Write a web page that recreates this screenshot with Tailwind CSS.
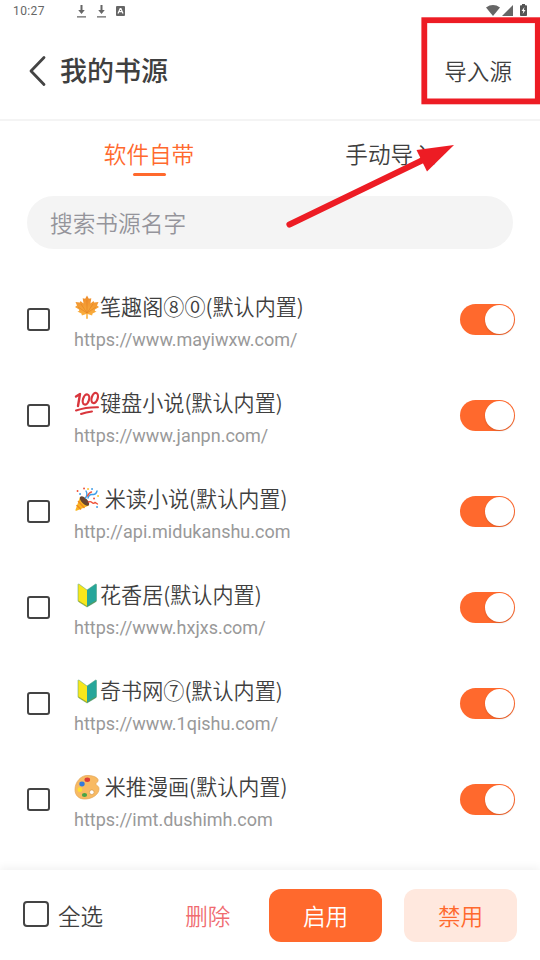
<!DOCTYPE html>
<html lang="zh-CN">
<head>
<meta charset="utf-8">
<title>我的书源</title>
<script src="https://cdn.jsdelivr.net/npm/@tailwindcss/browser@4"></script>
</head>
<body class="bg-white">
<div class="relative flex h-[960px] w-[540px] flex-col overflow-hidden bg-white font-['Noto_Sans_CJK_SC',sans-serif] font-[350] text-[#3f3f3f]">
  <!-- status bar -->
  <div class="flex h-[22px] shrink-0 items-center pl-[13px] pr-3 text-[#666]">
    <span class="w-[63px] font-['Roboto',sans-serif] text-[12px] font-normal leading-[22px] tracking-[0.4px]">10:27</span>
    <svg class="h-[13px] w-[11px]" viewBox="0 0 11 13" fill="#666"><path d="M4.500 0h2v5h2.300L5.500 9 2.200 5h2.300zM1 11.200h9v1.300H1z"/></svg>
    <svg class="ml-[9px] h-[13px] w-[11px]" viewBox="0 0 11 13" fill="#666"><path d="M4.500 0h2v5h2.300L5.500 9 2.200 5h2.300zM1 11.200h9v1.300H1z"/></svg>
    <svg class="ml-[9px] h-[10px] w-[9px]" viewBox="0 0 9 10"><rect width="9" height="10" rx="1" fill="#666"/><path d="M2 7.500 4.200 2.500h.7L7 7.500M3.200 5.600h2.600" fill="none" stroke="#fff" stroke-width="1.200"/></svg>
    <svg class="relative -top-px ml-auto h-[11px] w-[14px]" viewBox="0 0 14 11" fill="#666"><path d="M0 2.500Q7-2.300 14 2.500L7 11z"/></svg>
    <svg class="relative -top-px ml-[2px] h-[11px] w-[11px]" viewBox="0 0 11 11" fill="#666"><path d="M11 0v11H0z"/></svg>
    <svg class="relative -top-px ml-[7px] mr-px h-[12px] w-[7px]" viewBox="0 0 7 12"><path d="M2 0h3v1.200h1.200q.8 0 .8.8v9q0 1-.8 1H.8Q0 12 0 11V2q0-.8.8-.8H2z" fill="#555"/><path d="M4.400 3 1.600 7h1.700L2.700 10l2.800-4H3.900z" fill="#fff"/></svg>
  </div>
  <!-- header -->
  <header class="flex h-[99px] shrink-0 items-center border-b-2 border-[#f4f4f4] pl-[28px] pr-[28px]">
    <svg class="h-[32px] w-[19px]" viewBox="0 0 19 32" fill="none" stroke="#444" stroke-width="2.800" stroke-linecap="round" stroke-linejoin="round"><path d="M16 2.500 3 16l13 13.500"/></svg>
    <h1 class="-mt-[2px] ml-[13px] text-[27px] font-medium leading-[40px]">我的书源</h1>
    <span class="ml-auto text-[22.6px] leading-[34px]">导入源</span>
  </header>
  <!-- tabs -->
  <nav class="flex h-[75px] shrink-0 px-[26px] pt-[16px] text-[22.6px] leading-[34px]">
    <div class="flex w-[246px] flex-col items-center text-[#ff692d]"><span>软件自带</span><i class="mt-[2px] h-[3px] w-[33px] rounded-full bg-[#ff692d]"></i></div>
    <div class="w-[237px] text-center">手动导入</div>
  </nav>
  <!-- search -->
  <div class="mx-[27px] flex h-[53px] shrink-0 items-center rounded-full bg-[#f4f4f4] pl-[23px] text-[22.7px] leading-[34px] text-[#94949b]">搜索书源名字</div>
  <!-- sources -->
  <main id="list" class="mt-[22px] flex flex-col"></main>
  <!-- actions -->
  <footer class="absolute inset-x-0 bottom-0 flex h-[90px] items-center bg-white pl-[23px] pr-[23px] text-[22.6px] leading-[34px] shadow-[0_-3px_8px_rgba(0,0,0,0.05)]">
    <span class="-mt-[2px] h-[26px] w-[26px] rounded-[4px] border-2 border-[#444]"></span>
    <span class="ml-[9px] pt-px">全选</span>
    <span class="ml-[82px] pt-px text-[#f06b70]">删除</span>
    <span class="ml-auto h-[53px] w-[113px] rounded-[12px] bg-[#ff692d] text-center leading-[53px] text-white">启用</span>
    <span class="ml-[22px] h-[53px] w-[113px] rounded-[12px] bg-[#ffe8de] text-center leading-[53px] text-[#ff692d]">禁用</span>
  </footer>
  <!-- highlight box and arrow -->
  <svg class="pointer-events-none absolute inset-0" width="540" height="960" viewBox="0 0 540 960">
    <rect x="424.300" y="20.200" width="113.500" height="81.200" fill="none" stroke="#ed1c24" stroke-width="5.800"/>
    <path d="M289.500 224.500 425 159" stroke="#ed1c24" stroke-width="6.200" stroke-linecap="round"/>
    <path d="M454 145 416.500 150 427 171.500z" fill="#ed1c24"/>
  </svg>
</div>

<template id="leaf"><svg viewBox="0 0 26 26"><defs><linearGradient id="lg" x2="0" y2="1"><stop stop-color="#ee8a2a"/><stop offset="1" stop-color="#fcb540"/></linearGradient></defs><path d="m13 1.500 1.800 3.200 2.500-.4-.8 5.200 3-2.500.6 1.500 4.400-.5-1.500 3.500 2 1.500-4 2.500-.2 1.500 1.800.5-4 2-.5 2-4.400-1.500.2 4.800h-1.800l.2-4.800L7.900 21.500l-.5-2-4-2 1.800-.5-.2-1.500-4-2.500 2-1.500L1.500 8l4.400.5L6.500 7l3 2.500-.8-5.200 2.500.4z" fill="url(#lg)"/><path d="M13 6v13L7 10M13 19l6-9M13 19l-9-6M13 19l9-6" stroke="#e27f22" stroke-width=".6" fill="none"/></svg></template>
<template id="hundred"><svg viewBox="0 0 26 26" fill="none" stroke="#d9363d" stroke-linecap="round" stroke-linejoin="round"><path d="M2 6.500 6 4 4 16" stroke-width="2.400"/><ellipse cx="12" cy="9.500" rx="3" ry="5.200" transform="rotate(17 12 9.500)" stroke-width="2.200"/><ellipse cx="20.700" cy="8" rx="3" ry="5.200" transform="rotate(17 20.700 8)" stroke-width="2.200"/><path d="M2 20.500Q12 17 24 17.200" stroke-width="2"/><path d="M7 24q5-2 11-2.600" stroke-width="2"/></svg></template>
<template id="party"><svg viewBox="0 0 26 26" fill="none" stroke-linecap="round"><path d="M6 11 1.500 23.800q-.3 1.200 1 1L15 19.500z" fill="#fbb51d"/><path d="m4.500 15.500 5.500 6M3 19.500l3.500 3.500" stroke="#ef8b20" stroke-width="1.600"/><ellipse cx="10.500" cy="15" rx="2.800" ry="6" transform="rotate(-45 10.500 15)" fill="#68442f"/><path d="M11.500 12q2.500-3.500.5-7" stroke="#3f9ee8" stroke-width="1.400"/><path d="M14 12q1-4 4.500-3.500T23 5" stroke="#3f9ee8" stroke-width="1.400"/><path d="M14.500 16q2-1 3.500.5t3 0l2.500 1.500M13.500 10q1.500-3.500 4-4" stroke="#ee5138" stroke-width="1.400"/><g stroke-width="1.800"><path d="M3.500 5h.1M10 2.500h.1M20 12.500h.1" stroke="#ee5138"/><path d="M6 8h.1M18 3h.1M23 21h.1" stroke="#3f9ee8"/><path d="M14 3h.1M24 10h.1" stroke="#fbc02d"/></g></svg></template>
<template id="beginner"><svg viewBox="0 0 26 26"><path d="M4 2.500q.2-1 1.200-.3L13 8v17l-8.300-5.200Q4 19.300 4 18.500z" fill="#f8e71c"/><path d="M22.500 2.500q-.2-1-1.200-.3L13 8v17l8.800-5.200q.7-.5.700-1.300z" fill="#26a69a"/><path d="M4 2.500q.2-1 1.200-.3L13 8l8.300-5.800q1-.7 1.200.3v16q0 .8-.7 1.300L13 25l-8.300-5.200Q4 19.300 4 18.500z" fill="none" stroke="#4b9b78" stroke-width=".5"/><path d="m4.500 19 8.500 5.300 9-5.300" fill="none" stroke="#7b8d2b" stroke-opacity=".6"/></svg></template>
<template id="palette"><svg viewBox="0 0 26 26"><path d="M15 1.500C7 .5 1 8 1 15.500c0 6.500 4.500 10 11 9.500C19 24.500 25 20 25 15c0-3.500-2.500-3-3-4.500-.7-1.700 3-2.500 2-5C22.800 2.700 18.500 1.800 15 1.500z" fill="#f8ba63" stroke="#e3a553" stroke-width=".7"/><circle cx="17.800" cy="18.200" r="2.300" fill="#fff" stroke="#cc8e42" stroke-width=".6"/><ellipse cx="13.300" cy="5.800" rx="2.800" ry="2.200" fill="#dc3d38"/><ellipse cx="8" cy="10" rx="2.700" ry="2.400" fill="#3479dc"/><circle cx="5.900" cy="15.700" r="2.400" fill="#ffdf32"/><ellipse cx="10.500" cy="21" rx="2.600" ry="2.100" fill="#48a546"/></svg></template>
<template id="row">
  <div class="flex h-24 items-center pl-[27px] pr-[25px]">
    <span class="h-[23px] w-[23px] rounded-[3px] border-2 border-[#444]"></span>
    <div class="ml-6 flex flex-col pt-[3px]">
      <div class="flex h-[31px] items-center"><span data-icon class="h-[25px] w-[26px]"></span><span data-name class="whitespace-pre text-[21.1px] leading-[31px]"></span></div>
      <div data-url class="mt-[7px] font-['Roboto',sans-serif] text-[18px] font-normal leading-[22px] text-[#999]"></div>
    </div>
    <span class="ml-auto flex h-[31px] w-[55px] justify-end rounded-full bg-[#ff692d] p-px"><i class="h-[29px] w-[29px] rounded-full bg-white shadow-[0_1px_2px_rgba(0,0,0,0.15)]"></i></span>
  </div>
</template>
<script>
const sources = [
  ['leaf', '笔趣阁⑧⓪(默认内置)', 'https://www.mayiwxw.com/'],
  ['hundred', '键盘小说(默认内置)', 'https://www.janpn.com/'],
  ['party', ' 米读小说(默认内置)', 'http://api.midukanshu.com'],
  ['beginner', '花香居(默认内置)', 'https://www.hxjxs.com/'],
  ['beginner', '奇书网⑦(默认内置)', 'https://www.1qishu.com/'],
  ['palette', ' 米推漫画(默认内置)', 'https://imt.dushimh.com']
];
for (const [icon, name, url] of sources) {
  const row = document.getElementById('row').content.cloneNode(true);
  row.querySelector('[data-icon]').append(document.getElementById(icon).content.cloneNode(true));
  row.querySelector('[data-name]').textContent = name;
  row.querySelector('[data-url]').textContent = url;
  document.getElementById('list').append(row);
}
</script>
</body>
</html>
